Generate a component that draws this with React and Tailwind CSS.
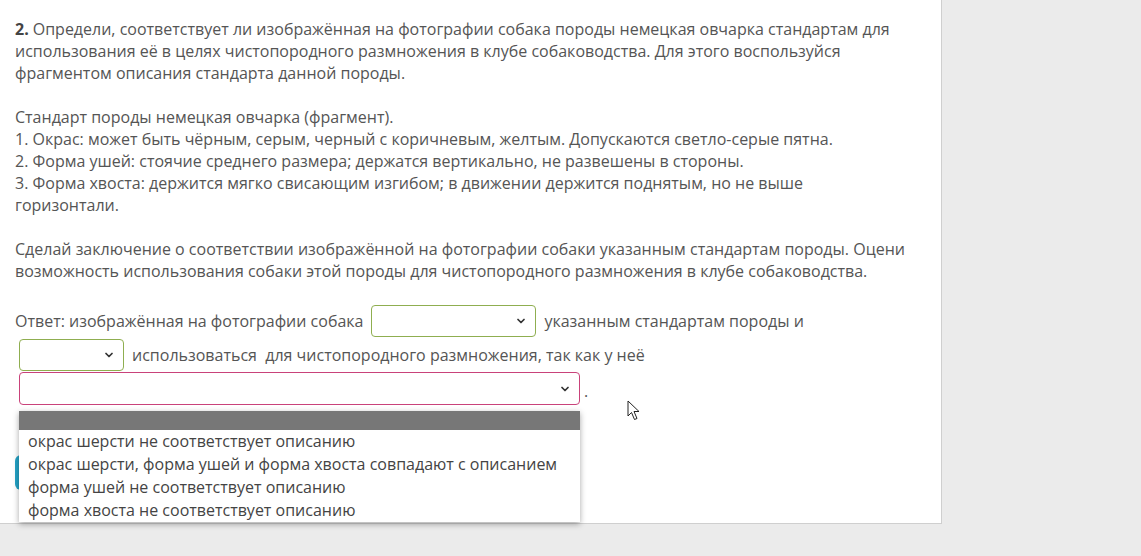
import { ChevronDown } from 'lucide-react';

const options = [
  'окрас шерсти не соответствует описанию',
  'окрас шерсти, форма ушей и форма хвоста совпадают с описанием',
  'форма ушей не соответствует описанию',
  'форма хвоста не соответствует описанию',
];

const Select = ({ className }) => (
  <div className={`flex items-center justify-end bg-white rounded-[4px] border pr-[8px] ${className}`}>
    <ChevronDown size={12} strokeWidth={3.5} className="text-[#333]" />
  </div>
);

const App = () => {
  return (
    <div className="w-[1141px] h-[556px] bg-[#ebebeb] overflow-hidden font-['Open_Sans',sans-serif] text-[16px] leading-[22px] text-[#555]">
      <div className="relative w-[942px] h-[524px] bg-white border-r border-b border-[#cfcfcf] pl-[15px] pt-[18px]">
        <p>
          <b className="text-[#444] mr-[4px]">2.</b>Определи, соответствует ли изображённая на фотографии собака породы немецкая овчарка стандартам для
          использования её в целях чистопородного размножения в клубе собаководства. Для этого воспользуйся
          фрагментом описания стандарта данной породы.
        </p>
        <p className="mt-[22px]">
          Стандарт породы немецкая овчарка (фрагмент).<br />
          1. Окрас: может быть чёрным, серым, черный с коричневым, желтым. Допускаются светло-серые пятна.<br />
          2. Форма ушей: стоячие среднего размера; держатся вертикально, не развешены в стороны.<br />
          3. Форма хвоста: держится мягко свисающим изгибом; в движении держится поднятым, но не выше<br />
          горизонтали.
        </p>
        <p className="mt-[22px] pr-[20px]">
          Сделай заключение о соответствии изображённой на фотографии собаки указанным стандартам породы. Оцени
          возможность использования собаки этой породы для чистопородного размножения в клубе собаководства.
        </p>

        <div className="mt-[23px] flex items-center h-[32px]">
          <span>Ответ: изображённая на фотографии собака</span>
          <Select className="ml-[8px] w-[165px] h-[32px] border-[#8fae50]" />
          <span className="ml-[8px]">указанным стандартам породы и</span>
        </div>
        <div className="mt-[2px] flex items-center h-[32px] pl-[4px]">
          <Select className="w-[105px] h-[32px] border-[#8fae50]" />
          <span className="ml-[8px]">использоваться&nbsp; для чистопородного размножения, так как у неё</span>
        </div>
        <div className="relative mt-[1px] flex items-center h-[33px] pl-[4px]">
          <Select className="w-[561px] h-[33px] border-[#c9427a]" />
          <span className="ml-[4px] mt-[4px]">.</span>

          <div className="absolute left-[4px] top-[39px] w-[561px] z-10 bg-white shadow-[0_2px_6px_rgba(0,0,0,0.35)] text-[#444]">
            <div className="h-[19px] bg-[#777]" />
            {options.map((o) => (
              <div key={o} className="h-[23px] leading-[23px] pl-[9px] text-[16px] whitespace-nowrap">{o}</div>
            ))}
          </div>
        </div>

        <button className="mt-[50px] h-[35px] w-[140px] rounded-[6px] bg-[#24a3c6]" />

        <svg className="absolute left-[627px] top-[400px]" width="14" height="22" viewBox="0 0 14 22">
          <path d="M1 1 L1 16 L4.5 12.5 L7.5 19.5 L10 18.5 L7 11.5 L12 11.5 Z" fill="#fff" stroke="#222" strokeWidth="1" strokeLinejoin="round" />
        </svg>
      </div>
    </div>
  );
};

export default App;
